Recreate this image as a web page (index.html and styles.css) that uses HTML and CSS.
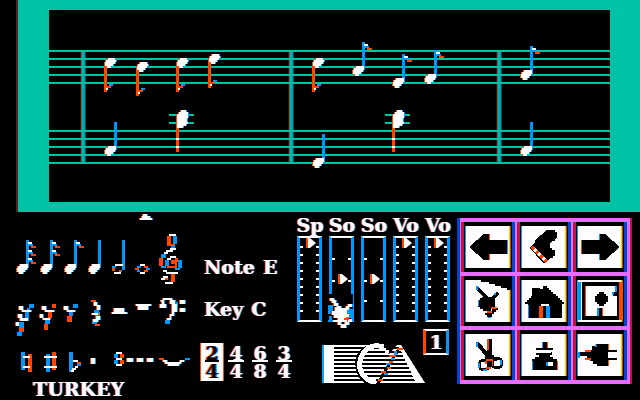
FILE: index.html
```html
<!DOCTYPE html>
<html lang="en">
<head>
<meta charset="utf-8">
<title>Turkey</title>
<link rel="stylesheet" href="styles.css">
</head>
<body>
<svg class="defs" aria-hidden="true">
  <defs>
    <g id="head"><path class="w fringe" d="M4 0h8v4h-1v2h-2v2h-2v2h-4v-2h-2v-4h1v-2h2z"/></g>
    <g id="flag"><path class="b" d="M13 4h4v2h-4z"/><path class="w" d="M12 2h4v2h-4z"/><path class="o" d="M15 6h5v2h-5z"/></g>
    <g id="quarter"><path class="b" d="M10 -24h3v24h-3z"/><use href="#head"/></g>
    <g id="eighth"><use href="#quarter"/><use href="#flag" y="-24"/></g>
    <g id="eighth-down"><path class="o" d="M0 8h3v26h-3zM3 28h4v2h-4z"/><path class="b" d="M5 26h4v2h-4z"/><path class="w" d="M2 30h2v2h-2z"/><path class="w fringe" d="M4 0h7v2h1v2h-1v2h-2v2h-2v2h-4v-2h-2v-4h1v-2h2z"/></g>
    <g id="chord"><path class="t" d="M-7 4h25v2h-25zM-7 12h25v2h-25z"/><path class="o" d="M0 6h3v36h-3z"/><path class="w fringe" d="M5 0h5v2h2v6h-1v4h1v2h-2v2h-3v2h-6V4h2v-2h2z"/><path class="w" d="M0 28h3v2h-3zM0 36h3v2h-3z"/></g>
    <g id="barline"><path fill="#3c1c00" d="M0 0h1v110h-1z"/><path fill="#52605a" d="M1 0h1v110h-1z"/><path class="t" d="M2 0h1v110h-1z"/><path fill="#009bd2" d="M3 0h2v110h-2z"/><path fill="#005020" d="M5 0h1v110h-1z"/></g>
    <g id="staff"><path class="t" d="M0 0h4000v2H0zM0 8h4000v2H0zM0 16h4000v2H0zM0 24h4000v2H0zM0 32h4000v2H0z"/></g>
    <clipPath id="logo-shape"><path d="M2 0h56l9 9 8-9h4l24 38H2z"/></clipPath>
  </defs>
</svg>

<main>
  <section class="frame">
    <svg class="score" role="img" aria-label="Score">
      <use href="#barline" x="31" y="42"/><use href="#barline" x="239" y="42"/><use href="#barline" x="447" y="42"/>
      <use href="#staff" y="40"/><use href="#staff" y="120"/>
      <use href="#eighth-down" x="55" y="48"/><use href="#eighth-down" x="87" y="52"/><use href="#eighth-down" x="127" y="48"/><use href="#eighth-down" x="159" y="44"/><use href="#eighth-down" x="263" y="48"/>
      <use href="#eighth" x="303" y="56"/><use href="#eighth" x="343" y="68"/><use href="#eighth" x="375" y="64"/><use href="#eighth" x="471" y="60"/>
      <use href="#quarter" x="55" y="136"/><use href="#quarter" x="263" y="148"/><use href="#quarter" x="471" y="136"/>
      <use href="#chord" x="127" y="100"/><use href="#chord" x="343" y="100"/>
    </svg>
  </section>

  <section class="panel">
    <div class="palette">
      <svg class="marker" aria-hidden="true"><path class="w fringe" d="M129 0h4v2h3v2h2v2h-12v-2h2v-2h1z"/></svg>
      <div class="row notes">
        <button aria-label="Thirty-second note"><svg><use href="#eighth" x="2" y="32"/><use href="#flag" x="2" y="16"/><use href="#flag" x="2" y="24"/></svg></button>
        <button aria-label="Sixteenth note"><svg><use href="#eighth" x="2" y="32"/><use href="#flag" x="2" y="16"/></svg></button>
        <button aria-label="Eighth note"><svg><use href="#eighth" x="2" y="32"/></svg></button>
        <button aria-label="Quarter note"><svg><use href="#quarter" x="2" y="32"/></svg></button>
        <button aria-label="Half note"><svg><path class="b" d="M12 8h3v30h-3zM2 34h4v2h-4zM9 38h3v2h-3z"/><path class="o" d="M2 36h3v3h-3zM9 38h2v2h-2z"/><path class="w" d="M5 32h8v2h-8zM4 40h7v2h-7z"/></svg></button>
        <button aria-label="Whole note"><svg><path class="w" d="M6 32h5v2h-5zM6 40h5v2h-5z"/><path class="b" d="M3 34h4v2h-4zM12 36h4v2h-4zM3 38h3v2h-3z"/><path class="o" d="M10 34h4v2h-4zM1 36h4v2h-4zM10 38h4v2h-4z"/></svg></button>
        <button aria-label="Treble clef"><svg><path class="o" d="M9 4h4v8h4v2H9zM1 26h4v8H1zM13 28h4v4h-4zM9 34h8v-6h2v8H9zM13 42h4v8h-4zM7 46h3v2H7zM17 26h3v4h-3z"/><path class="b" d="M15 4h4v8h-4zM13 14h4v2h-4zM3 22h5v4H3zM7 28h4v6H7zM20 28h4v8h-4zM3 34h5v2H3zM17 36h5v2h-5z"/><path class="w" d="M11 2h7v2h-7zM12 16h6v2h-6zM8 18h7v2H8zM6 20h4v2H6zM12 24h6v2h-6zM9 26h4v2H9zM5 38h4v2H5zM8 40h12v2H8zM5 44h5v2H5zM3 46h4v2H3zM7 50h8v2H7z"/></svg></button>
      </div>
      <div class="row rests">
        <button aria-label="Thirty-second rest"><svg><path class="b" d="M15 6h5v4h-5zM13 10h3v2h-3zM11 14h4v6h-4zM5 24h5v6H5zM3 34h5v4H3z"/><path class="o" d="M5 30h5v4H5z"/><path class="w fringe" d="M5 8h4v4H5zM8 12h9v2H8zM4 16h4v4H4zM6 20h8v3H6zM2 24h3v4H2z"/></svg></button>
        <button aria-label="Sixteenth rest"><svg><path class="o" d="M14 6h4v4h-4zM10 14h4v6h-4zM6 26h4v6H6z"/><path class="b" d="M7 22h5v4H7z"/><path class="w fringe" d="M4 8h4v4H4zM7 12h9v2H7zM2 16h3v4H2zM5 20h7v2H5z"/></svg></button>
        <button aria-label="Eighth rest"><svg><path class="b" d="M11 6h5v4h-5zM7 14h4v4H7z"/><path class="o" d="M5 18h5v6H5z"/><path class="w fringe" d="M2 8h4v4H2zM5 12h8v2H5z"/></svg></button>
        <button aria-label="Quarter rest"><svg><path class="o" d="M5 2h5v2H5zM9 14h5v4H9zM9 26h5v2H9z"/><path class="b" d="M8 12h5v3H8zM6 22h5v4H6z"/><path class="w fringe" d="M8 4h3v3h3v5h-3V8H8zM6 15h6v2H6zM10 18h4v4h-4zM7 21h5v3H7z"/></svg></button>
        <button aria-label="Half rest"><svg><path class="w fringe" d="M4 10h10v4h3v2H2v-2h2z"/></svg></button>
        <button aria-label="Whole rest"><svg><path class="w fringe" d="M2 6h15v2h-3v4H4V8H2z"/></svg></button>
        <button aria-label="Bass clef"><svg><path class="b" d="M15 4h5v10h-5zM7 22h5v4H7z"/><path class="w fringe" d="M5 0h9v2h3v4h2v8h-3v4h-3v4H9v-2h3v-4h2V6h-2V2H6v4h2v4H2V6h2V4H3V2h2zM22 2h5v4h-5zM22 10h5v4h-5z"/></svg></button>
      </div>
      <div class="row marks">
        <button aria-label="Natural"><svg><path class="b" d="M7 2h4v18H7z"/><path class="o" d="M14 4h4v18h-4z"/><path class="w" d="M9 6h7v2H9zM9 16h7v2H9z"/></svg></button>
        <button aria-label="Sharp"><svg><path class="b" d="M8 4h4v18H8z"/><path class="o" d="M14 2h4v18h-4z"/><path class="w" d="M6 6h13v2H6zM6 16h13v2H6z"/></svg></button>
        <button aria-label="Flat"><svg><path class="b" d="M7 2h4v20H7zM15 14h4v2h-4z"/><path class="o" d="M15 12h4v2h-4z"/><path class="w" d="M11 10h5v2h-5zM10 18h4v2h-4zM9 20h3v2H9zM13 16h3v2h-3z"/></svg></button>
        <button aria-label="Dot"><svg><path class="w fringe" d="M5 8h4v6H5z"/></svg></button>
        <button class="wide" aria-label="Octave"><svg><path class="b" d="M4 4h4v4H4zM4 10h4v4H4z"/><path class="o" d="M10 4h4v4h-4zM10 10h4v4h-4z"/><path class="w" d="M6 2h6v2H6zM6 8h6v2H6zM6 14h6v2H6z"/><path class="w fringe" d="M17 8h6v4h-6zM27 8h6v4h-6zM37 8h6v4h-6z"/></svg></button>
        <button aria-label="Slur"><svg><path class="o" d="M1 8h5v2H1z"/><path class="b" d="M27 8h5v2h-5z"/><path class="w fringe" d="M5 10h4v2h13v-2h4v2h-3v2h-2v2H10v-2H7v-2H5z"/></svg></button>
      </div>
      <h1>TURKEY</h1>
    </div>

    <div class="info">
      <dl>
        <div><dt>Note</dt><dd>E</dd></div>
        <div><dt>Key</dt><dd>C</dd></div>
      </dl>
      <div class="meters">
        <button class="selected"><span>2</span><span>4</span></button>
        <button><span>4</span><span>4</span></button>
        <button><span>6</span><span>8</span></button>
        <button><span>3</span><span>4</span></button>
      </div>
    </div>

    <div class="mixer">
      <div class="sliders">
        <label>Sp<input class="fine" type="range" min="0" max="10" value="0"></label>
        <label>So<input class="coarse" type="range" min="0" max="10" value="5"></label>
        <label>So<input class="coarse" type="range" min="0" max="10" value="5"></label>
        <label>Vo<input class="fine" type="range" min="0" max="10" value="0"></label>
        <label>Vo<input class="fine" type="range" min="0" max="10" value="0"></label>
        <svg class="pointer" aria-hidden="true"><path fill="#000" d="M0 -4h25v22H0z"/><path class="b" d="M0 7h5v9H0zM18 11h7v9h-7zM0 22h5v2H0z"/><path class="w fringe" d="M2 0h4v2h2v3h2v3h3v2h5V8h2V6h4v3h-3v3h-2v4h2v3h-3v3h-8v-2H6v-3H4v-4h3v-4h2V8H6V5H4V3H2z"/><path class="w fringe" d="M20 21h4v3h-3v3h-3v3h-5v-3h-3v-3h3v2h4v-2h3z"/><path class="o" d="M16 20h5v2h-5z"/></svg>
      </div>
      <div class="foot">
        <svg class="logo" role="img" aria-label="ECA">
          <g clip-path="url(#logo-shape)">
            <path class="w" d="M2 0h102v2H2zM2 4h102v2H2zM2 8h102v2H2zM2 12h102v2H2zM2 16h102v2H2zM2 20h102v2H2zM2 24h102v2H2zM2 28h102v2H2zM2 32h102v2H2zM2 36h102v2H2zM2 0h10v38H2z"/>
            <path class="w" d="M76 0h3l25 38H94z"/>
            <path class="gap" d="M76 5L56 38"/>
          </g>
          <path class="gap" d="M46 2C31 7 31 31 46 38"/>
          <path class="ring" d="M62 2C56 0 47 0 43 6C36 14 36 25 42 31C46 36 50 37 54 37"/>
          <path class="w" d="M57 1h4v2h3v2h3v3h-4V6h-4V4h-2z"/>
          <path class="o" d="M75 3h6v2h-6zM67 10h7v2h-7zM67 16h4v2h-4zM65 22h4v2h-4zM59 26h5v2h-5zM56 34h5v2h-5z"/>
          <path class="b" d="M72 6h3v4h-3zM69 13h4v2h-4zM64 18h5v2h-5zM62 28h4v2h-4z"/>
          <path fill="#00a8ff" d="M0 0h2v38H0z"/>
        </svg>
        <output>1</output>
      </div>
    </div>

    <div class="tools">
      <button aria-label="Back"><svg><path d="M4 21L19 8h5v6h18v14H24v6h-5z"/><path class="b" d="M42 14h1v14h-1z"/><path class="o" d="M24 8h1v6h-1zM24 28h1v6h-1z"/></svg></button>
      <button aria-label="Erase"><svg><path d="M26 4h8v2h2v5l-2 2v2h-3l-2 3v4h2v2h3v6h-2v2h-3l-5 5h-2L9 22l5-6v-2z"/><path class="stripe" d="M11 21l15 15"/><path class="stripe-dash" d="M11 21l15 15"/></svg></button>
      <button aria-label="Forward"><svg><path d="M5 14h18V8h5l15 13-15 13h-5v-6H5z"/><path class="o" d="M4 14h1v14H4z"/><path class="b" d="M22 8h1v6h-1zM22 28h1v6h-1z"/></svg></button>
      <button aria-label="Hand"><svg><path d="M16 0h31v10h-5V8h-6V6h-6V4h-6V2h-8z"/><path class="line" d="M12 8l12 12M33 13l-8 8"/><path d="M17 17h11v2h2v8h-2v2h-2v2h-8v-2h-3v-2h-2v-7h2v-2h2zM30 28h3v2h-2v2h-2v2h-2v3h-5v-2h-2v-2h4v-2h3v-2h3z"/><path class="o" d="M26 27h6v2h-6zM22 31h5v2h-5z"/><path class="b" d="M11 6h2v4h-2zM13 20h1v6h-1zM29 13h2v2h-2zM23 37h3v1h-3z"/></svg></button>
      <button aria-label="House"><svg><path d="M4 22h2v-2h2v-2h2v-2h1V8h8v1h3V6h4v2h2v2h2v2h2v2h3v2h2v2h2v2h2v2h2v2h-2v14H7V24H4z"/><path class="w" d="M20 24h8v2h-8z"/><path class="o" d="M18 26h4v12h-4z"/><path class="b" d="M25 26h4v12h-4zM7 25h1v13H7z"/></svg></button>
      <button aria-label="Door"><svg><path d="M5 2h37v38H5z"/><path class="b" d="M1 2h3v38H1z"/><path class="o" d="M42 2h4v38h-4z"/><path class="w" d="M8 6h32v30H8z"/><path d="M22 12h5v2h2v2h2v6h-2v2h-2v2h-5v-2h-2v-2h-2v-6h2v-2h2zM36 12h6v4h-6zM21 28h5v8h-5z"/><path class="b" d="M20 28h2v8h-2zM35 12h2v3h-2zM38 6h2v6h-2z"/><path class="o" d="M25 28h1v8h-1zM8 6h1v30H8z"/></svg></button>
      <button aria-label="Cut"><svg><path class="line" d="M12 9l11 13M26 23l6 3"/><path d="M22 5h5v16h2v4h-9v-5h2z"/><circle class="loop" cx="19" cy="31" r="5"/><circle class="loop" cx="32" cy="29" r="5"/><path d="M22 27h5v6h-5z"/><path class="o" d="M22 5h2v11h-2zM21 25h7v2h-7zM21 33h5v2h-5zM20 27h2v3h-2zM27 27h1v5h-1z"/><path class="b" d="M11 8h2v5h-2zM13 29h2v5h-2zM35 26h2v5h-2zM18 35h4v2h-4z"/></svg></button>
      <button aria-label="Ink"><svg><path d="M22 8h4v6h6v2h-2v2h1v3h-2v2h3v2h4v11H11V25h3v-2h4v-2h-3v-2h15v-3H15v-2h7z"/><path class="w" d="M16 16h15v2H16zM27 28h5v4h-5z"/><path class="b" d="M21 8h1v6h-1zM25 28h2v4h-2zM11 27h1v9h-1z"/><path class="o" d="M26 8h1v6h-1zM36 27h1v9h-1z"/></svg></button>
      <button aria-label="Plug"><svg><path d="M1 18h10v-2h4v-4h4v-2h12v6h9v2h-9v6h9v2h-9v6H20v-2h-4v-3h-3v-2h-3v-3H1z"/><path class="o" d="M31 10h1v6h-1zM31 26h1v6h-1zM8 16h6v2H8zM8 24h6v2H8z"/><path class="b" d="M0 18h3v6H0zM18 11h2v2h-2z"/></svg></button>
    </div>
  </section>
</main>
</body>
</html>
```
FILE: styles.css
```css
:root {
  --teal: #00c2a4;
  --blue: #0098ff;
  --orange: #ff4600;
  --white: #fffcff;
  --violet: #e86cff;
  --deep-blue: #0048d0;
  --red: #c8103c;
}

* { box-sizing: border-box; }

body {
  margin: 0;
  background: #000;
  color: var(--white);
  font: bold 19px/16px "DejaVu Serif", serif;
  text-shadow: -1px 0 var(--orange), 1px 0 var(--blue);
}

svg {
  display: block;
  width: 100%;
  height: 100%;
  overflow: visible;
  shape-rendering: crispEdges;
}

.defs { position: absolute; width: 0; height: 0; }
.w { fill: var(--white); }
.b { fill: var(--blue); }
.o { fill: var(--orange); }
.t { fill: var(--teal); }
.fringe { filter: drop-shadow(-1px 0 var(--orange)) drop-shadow(1px 0 var(--blue)); }

button {
  display: block;
  margin: 0;
  padding: 0;
  border: 0;
  background: none;
  color: inherit;
  font: inherit;
  text-shadow: inherit;
}

.frame {
  margin-left: 16px;
  padding: 10px 30px 10px 31px;
  border-left: 2px solid #4c2820;
  background: var(--teal);
}

.score {
  height: 192px;
  overflow: hidden;
  background: #000;
}

.panel {
  display: grid;
  grid-template-columns: 176px 94px 161px minmax(0, 1fr);
  column-gap: 4px;
  padding: 2px 8px 0 14px;
}

.marker { height: 6px; }

.row { display: flex; }
.row button { width: 24px; }
.row button:last-child { width: 32px; }
.row .wide { width: 48px; }
.notes { height: 54px; margin-top: 12px; }
.rests { height: 40px; margin-top: 12px; }
.marks { height: 26px; margin-top: 12px; }

h1 {
  margin: 5px 0 0 19px;
  font: inherit;
}

.info { padding: 45px 0 0 6px; }

dl { margin: 0; padding-left: 4px; }
dl div { display: flex; gap: 8px; margin-bottom: 26px; }
dd { margin: 0; }

.meters { display: flex; margin-top: 3px; }

.meters button {
  width: 24px;
  height: 38px;
  flex: none;
}

.meters span { display: block; height: 18px; line-height: 18px; }
.meters span:first-child {
  margin: 0 4px;
  border-bottom: 2px solid var(--white);
}

.meters .selected {
  background: var(--white);
  color: #000;
  border-left: 1px solid var(--orange);
  border-right: 1px solid var(--orange);
}

.meters .selected span:first-child { border-color: #000; }

.mixer { padding: 3px 0 0 2px; }

.sliders {
  position: relative;
  display: flex;
}

.sliders label {
  width: 32px;
  text-align: center;
  flex: none;
}

input {
  appearance: none;
  writing-mode: vertical-lr;
  display: block;
  width: 25px;
  height: 86px;
  margin: 3px 0 0 3px;
  padding: 0 0 0 3px;
  border: solid;
  border-width: 2px 3px;
  border-color: var(--white) var(--blue);
  background-color: #000;
  background-repeat: no-repeat;
}

input.fine {
  background-image:
    repeating-linear-gradient(transparent 0 6px, var(--white) 6px 8px),
    repeating-linear-gradient(transparent 0 6px, var(--white) 6px 8px);
  background-size: 3px 72px;
  background-position: 0 2px, 100% 2px;
}

input.coarse {
  background-image:
    linear-gradient(transparent 20px, var(--white) 20px 22px, transparent 22px 42px, var(--white) 42px 44px, transparent 44px 62px, var(--white) 62px 64px, transparent 64px),
    linear-gradient(transparent 20px, var(--white) 20px 22px, transparent 22px 42px, var(--white) 42px 44px, transparent 44px 62px, var(--white) 62px 64px, transparent 64px);
  background-size: 3px 100%;
  background-position: 0 0, 100% 0;
}

input::-webkit-slider-thumb {
  appearance: none;
  width: 10px;
  height: 10px;
  border-left: 2px solid var(--orange);
  background: var(--white);
  clip-path: polygon(0 0, 40% 0, 100% 50%, 40% 100%, 0 100%);
}

.pointer {
  position: absolute;
  top: 81px;
  left: 34px;
  width: 24px;
  height: 32px;
}

.foot {
  display: flex;
  align-items: flex-start;
  padding: 7px 0 0 28px;
}

.logo {
  width: 101px;
  height: 38px;
  margin-top: 16px;
}

.gap { fill: none; stroke: #000; stroke-width: 3; }
.ring { fill: none; stroke: var(--white); stroke-width: 5; }
.line { fill: none; stroke: #000; stroke-width: 4; }
.loop { fill: none; stroke: #000; stroke-width: 3; }

output {
  width: 26px;
  height: 26px;
  border: solid;
  border-width: 2px 3px;
  border-color: var(--white) var(--blue) var(--white) var(--orange);
  line-height: 22px;
  text-align: center;
}

.tools {
  display: grid;
  grid-template-columns: repeat(3, 1fr);
  gap: 4px 2px;
  align-self: start;
  margin-top: 4px;
  padding: 4px 3px 4px 1px;
  border: solid;
  border-width: 0 2px 0 3px;
  border-color: var(--red) var(--red) var(--red) var(--deep-blue);
  background: var(--violet);
}

.tools button {
  height: 50px;
  padding: 4px 1px;
  border: solid;
  border-width: 0 3px;
  border-color: #000 var(--deep-blue) #000 var(--red);
  background: #000;
}

.tools svg {
  background: var(--white);
  box-shadow: inset 1px 0 #00a8f0, inset -1px 0 #d83c00, inset -2px 0 #ffd000;
}

.stripe { stroke: var(--white); stroke-width: 3; }
.stripe-dash { stroke: var(--orange); stroke-width: 3; stroke-dasharray: 3 3; }
```
